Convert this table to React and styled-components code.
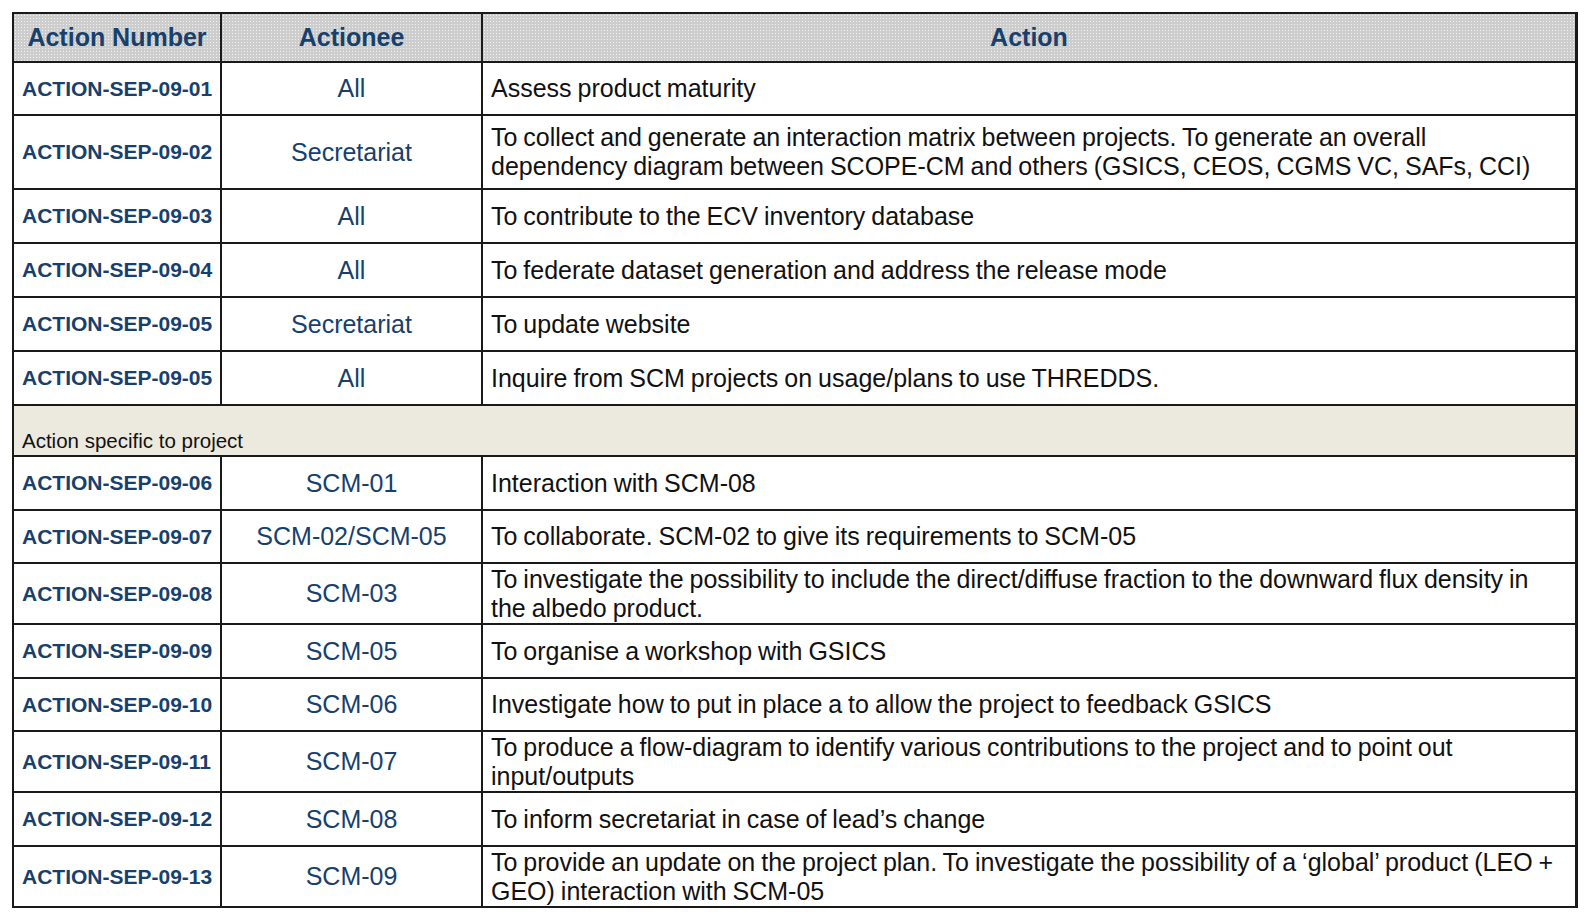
import styled, { createGlobalStyle } from "styled-components";

const GlobalStyle = createGlobalStyle`
  html, body {
    margin: 0;
    padding: 0;
    background: #ffffff;
  }
  body {
    font-family: "Liberation Sans", Arial, sans-serif;
  }
`;

const general = [
  { id: "ACTION-SEP-09-01", who: "All", what: "Assess product maturity", h: 53 },
  {
    id: "ACTION-SEP-09-02",
    who: "Secretariat",
    what: "To collect and generate an interaction matrix between projects. To generate an overall dependency diagram between SCOPE-CM and others (GSICS, CEOS, CGMS VC, SAFs, CCI)",
    h: 74,
  },
  { id: "ACTION-SEP-09-03", who: "All", what: "To contribute to the ECV inventory database", h: 54 },
  { id: "ACTION-SEP-09-04", who: "All", what: "To federate dataset generation and address the release mode", h: 54 },
  { id: "ACTION-SEP-09-05", who: "Secretariat", what: "To update website", h: 54 },
  { id: "ACTION-SEP-09-05", who: "All", what: "Inquire from SCM projects on usage/plans to use THREDDS.", h: 54 },
];

const specific = [
  { id: "ACTION-SEP-09-06", who: "SCM-01", what: "Interaction with SCM-08", h: 54 },
  { id: "ACTION-SEP-09-07", who: "SCM-02/SCM-05", what: "To collaborate. SCM-02 to give its requirements to SCM-05", h: 53 },
  {
    id: "ACTION-SEP-09-08",
    who: "SCM-03",
    what: "To investigate the possibility to include the direct/diffuse fraction to the downward flux density in the albedo product.",
    h: 61,
  },
  { id: "ACTION-SEP-09-09", who: "SCM-05", what: "To organise a workshop with GSICS", h: 54 },
  { id: "ACTION-SEP-09-10", who: "SCM-06", what: "Investigate how to put in place a to allow the project to feedback GSICS", h: 53 },
  {
    id: "ACTION-SEP-09-11",
    who: "SCM-07",
    what: "To produce a flow-diagram to identify various contributions to the project and to point out input/outputs",
    h: 61,
  },
  { id: "ACTION-SEP-09-12", who: "SCM-08", what: "To inform secretariat in case of lead\u2019s change", h: 54 },
  {
    id: "ACTION-SEP-09-13",
    who: "SCM-09",
    what: "To provide an update on the project plan. To investigate the possibility of a \u2018global\u2019 product (LEO + GEO) interaction with SCM-05",
    h: 61,
  },
];

const Page = styled.div`
  padding: 12px 10px 0 12px;
`;

const Table = styled.table`
  width: 1566px;
  border-collapse: collapse;
  table-layout: fixed;
  border-right: 3px solid #1a1a1a;
`;

const HeadCell = styled.th`
  height: 47px;
  padding: 0;
  border: 2px solid #1a1a1a;
  background-color: #cdcdcd;
  background-image: radial-gradient(#f2f2f2 0.7px, transparent 0.9px);
  background-size: 3px 3px;
  color: #17406d;
  font-size: 25px;
  font-weight: bold;
  text-align: center;
  vertical-align: middle;
`;

const Row = styled.tr`
  height: ${(p) => p.$h}px;
`;

const IdCell = styled.td`
  padding: 0 0 0 8px;
  border: 2px solid #1a1a1a;
  color: #17406d;
  font-size: 21px;
  font-weight: bold;
  white-space: nowrap;
  vertical-align: middle;
`;

const WhoCell = styled.td`
  padding: 0;
  border: 2px solid #1a1a1a;
  color: #17406d;
  font-size: 25px;
  text-align: center;
  vertical-align: middle;
`;

const WhatCell = styled.td`
  padding: 0 12px 0 8px;
  border: 2px solid #1a1a1a;
  color: #111111;
  font-size: 25px;
  line-height: 29px;
  word-spacing: -1px;
  vertical-align: middle;
`;

const SectionCell = styled.td`
  height: 47px;
  padding: 0 0 2px 8px;
  border: 2px solid #1a1a1a;
  background: #ece9df;
  color: #111111;
  font-size: 20.5px;
  vertical-align: bottom;
`;

const ActionRow = ({ item }) => (
  <Row $h={item.h}>
    <IdCell>{item.id}</IdCell>
    <WhoCell>{item.who}</WhoCell>
    <WhatCell>{item.what}</WhatCell>
  </Row>
);

export default function App() {
  return (
    <>
      <GlobalStyle />
      <Page>
        <Table>
          <colgroup>
            <col style={{ width: 208 }} />
            <col style={{ width: 261 }} />
            <col />
          </colgroup>
          <thead>
            <tr>
              <HeadCell>Action Number</HeadCell>
              <HeadCell>Actionee</HeadCell>
              <HeadCell>Action</HeadCell>
            </tr>
          </thead>
          <tbody>
            {general.map((item, i) => (
              <ActionRow key={"g" + i} item={item} />
            ))}
            <tr>
              <SectionCell colSpan={3}>Action specific to project</SectionCell>
            </tr>
            {specific.map((item, i) => (
              <ActionRow key={"s" + i} item={item} />
            ))}
          </tbody>
        </Table>
      </Page>
    </>
  );
}
